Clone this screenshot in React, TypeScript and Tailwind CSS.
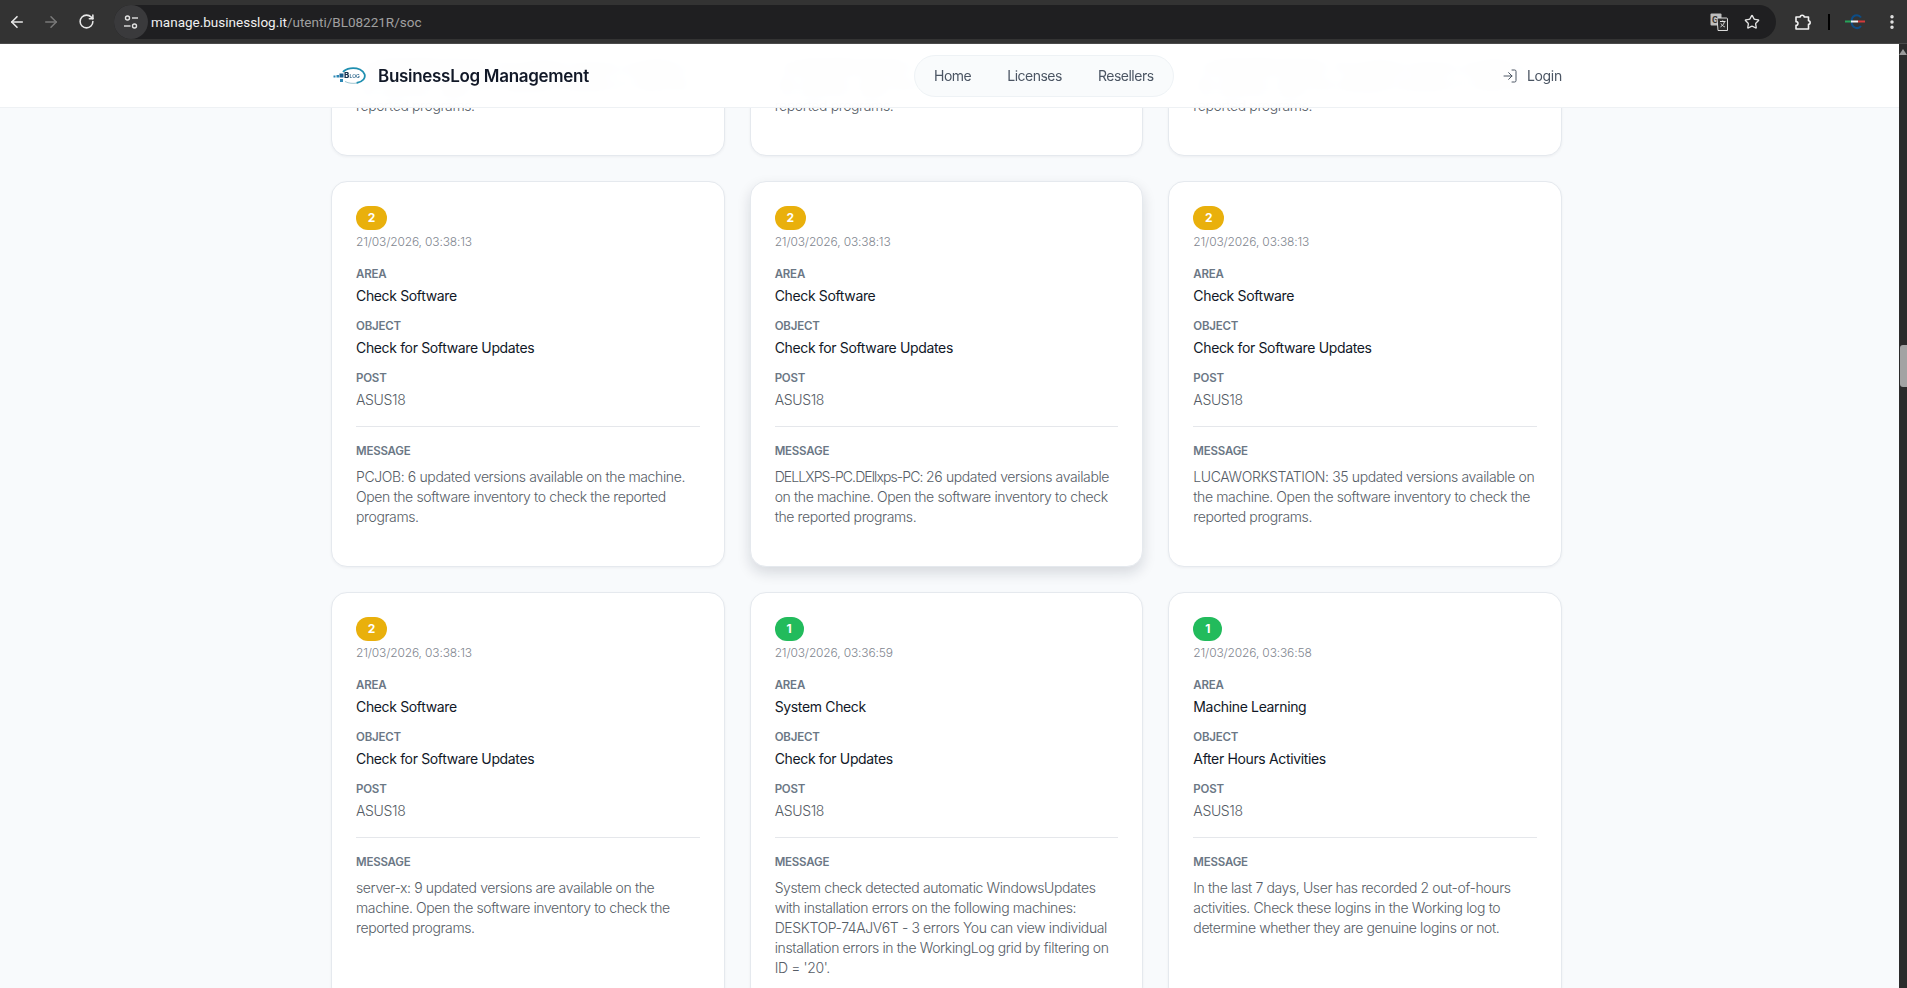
import type { ReactNode } from "react";
import { ArrowLeft, ArrowRight, RotateCw, Star, EllipsisVertical, LogIn } from "lucide-react";

type CardData = { level: number; date: string; area: string; object: string; post: string; message: ReactNode; raised?: boolean };

const sw = "Check Software";
const upd = "Check for Software Updates";
const cards: CardData[] = [
  { level: 2, date: "21/03/2026, 03:38:13", area: sw, object: upd, post: "ASUS18", message: "LUCAWORKSTATION: 35 updated versions available on the machine. Open the software inventory to check the reported programs." },
  { level: 2, date: "21/03/2026, 03:38:13", area: sw, object: upd, post: "ASUS18", message: "LUCAWORKSTATION: 35 updated versions available on the machine. Open the software inventory to check the reported programs." },
  { level: 2, date: "21/03/2026, 03:38:13", area: sw, object: upd, post: "ASUS18", message: "LUCAWORKSTATION: 35 updated versions available on the machine. Open the software inventory to check the reported programs." },
  { level: 2, date: "21/03/2026, 03:38:13", area: sw, object: upd, post: "ASUS18", message: "PCJOB: 6 updated versions available on the machine. Open the software inventory to check the reported programs." },
  {
    level: 2,
    date: "21/03/2026, 03:38:13",
    area: sw,
    object: upd,
    post: "ASUS18",
    message: (
      <>
        <span className="tracking-[-0.9px]">DELLXPS-PC.DEllxps-PC:</span> 26 updated versions available on the machine. Open the software inventory to check the reported programs.
      </>
    ),
    raised: true,
  },
  { level: 2, date: "21/03/2026, 03:38:13", area: sw, object: upd, post: "ASUS18", message: "LUCAWORKSTATION: 35 updated versions available on the machine. Open the software inventory to check the reported programs." },
  { level: 2, date: "21/03/2026, 03:38:13", area: sw, object: upd, post: "ASUS18", message: "server-x: 9 updated versions are available on the machine. Open the software inventory to check the reported programs." },
  { level: 1, date: "21/03/2026, 03:36:59", area: "System Check", object: "Check for Updates", post: "ASUS18", message: "System check detected automatic WindowsUpdates with installation errors on the following machines: DESKTOP-74AJV6T - 3 errors You can view individual installation errors in the WorkingLog grid by filtering on ID = '20'." },
  { level: 1, date: "21/03/2026, 03:36:58", area: "Machine Learning", object: "After Hours Activities", post: "ASUS18", message: "In the last 7 days, User has recorded 2 out-of-hours activities. Check these logins in the Working log to determine whether they are genuine logins or not." },
];

function Label({ children }: { children: string }) {
  return <div className="text-[11.5px] leading-4 font-semibold tracking-[-0.2px] text-[#6b7785]">{children}</div>;
}

function Field({ label, value, muted }: { label: string; value: string; muted?: boolean }) {
  return (
    <div>
      <Label>{label}</Label>
      <div className={`mt-1 text-sm leading-5 tracking-[-0.35px] ${muted ? "font-light text-[#565d66]" : "text-[#111827]"}`}>{value}</div>
    </div>
  );
}

function Card({ c }: { c: CardData }) {
  return (
    <div
      className={`rounded-2xl border border-[#e5e9ee] bg-white p-6 ${
        c.raised ? "shadow-[0_6px_14px_rgba(15,23,42,0.14)]" : "shadow-[0_1px_3px_rgba(15,23,42,0.05)]"
      }`}
    >
      <div
        className={`flex h-6 items-center justify-center rounded-full text-xs font-bold text-white ${
          c.level === 2 ? "w-[31px] bg-[#e9b00c]" : "w-[29px] bg-[#22bb5c]"
        }`}
      >
        {c.level}
      </div>
      <div className="mt-1 text-xs leading-4 font-light tracking-[-0.15px] text-[#7f868f]">{c.date}</div>
      <div className="mt-4 flex flex-col gap-3">
        <Field label="AREA" value={c.area} />
        <Field label="OBJECT" value={c.object} />
        <Field label="POST" value={c.post} muted />
      </div>
      <div className="mt-4 border-t border-[#e5e7eb] pt-4">
        <Label>MESSAGE</Label>
        <p className="mt-2 min-h-[75px] text-sm leading-5 font-light tracking-[-0.38px] text-[#565d66]">{c.message}</p>
      </div>
    </div>
  );
}

function TuneIcon() {
  return (
    <svg width="16" height="16" viewBox="0 0 16 16" fill="none" stroke="#e3e3e3" strokeWidth="1.4">
      <circle cx="4.5" cy="4" r="2" />
      <path d="M9 4h6" />
      <circle cx="11.5" cy="12" r="2" />
      <path d="M1 12h6.5" />
    </svg>
  );
}

function TranslateIcon() {
  return (
    <svg width="18" height="18" viewBox="0 0 18 18">
      <rect x="0.5" y="0.5" width="11" height="12" rx="1" fill="#bdbdbd" />
      <text x="2" y="10" fontSize="9" fontWeight="700" fontFamily="Roboto, sans-serif" fill="#333">G</text>
      <path d="M7 5h9.5a1 1 0 0 1 1 1v11.5H8z" fill="#2b2b2b" stroke="#d8d8d8" strokeWidth="1" />
      <path d="M10 8.5h5.5M12.7 7.5v1M14.5 8.5c-.6 2.6-2 4.2-4 5.4M11 10.5c.8 1.5 2 2.7 3.8 3.4" stroke="#e3e3e3" strokeWidth="1" fill="none" />
    </svg>
  );
}

function ExtensionIcon() {
  return (
    <svg width="18" height="18" viewBox="0 0 18 18" fill="none" stroke="#f2f2f2" strokeWidth="1.6" strokeLinejoin="round">
      <path d="M2 4h4.2C6.2 1.6 10.2 1.6 10.2 4H14.5v3.8c2.2 0 2.2 3.6 0 3.6V16H2v-3.6c2.6.2 2.6-4 0-3.8z" />
    </svg>
  );
}

function ProfileLogo() {
  return (
    <svg width="22" height="22" viewBox="0 0 22 22" fill="none">
      <path d="M17 6.5C14 2.5 7.5 4 7.5 10.5s6.5 8.5 9.5 4.5" stroke="#0d4d86" strokeWidth="2" />
      <rect x="1" y="9.5" width="6" height="2" fill="#27a35a" />
      <rect x="7" y="9.5" width="7" height="2" fill="#f2f2f2" />
      <rect x="14" y="9.5" width="7" height="2" fill="#d43a3a" />
    </svg>
  );
}

function BrandLogo() {
  return (
    <svg width="33" height="18" viewBox="0 0 33 18" fill="none" className="ml-[2px] shrink-0">
      <path d="M10 5C13 1 21 0 27 2.5c5 2.5 6 7 3.5 10-1.5 1.8-4 3-7 3.5" stroke="#1f8fb0" strokeWidth="1.8" />
      <path d="M12 14.5c4 2 8 2.2 12 1.5" stroke="#9fc6d2" strokeWidth="1" />
      <rect x="0.5" y="8.5" width="2" height="2" fill="#2b87b5" />
      <rect x="3.5" y="8" width="2.5" height="2.5" fill="#2b87b5" />
      <rect x="6.5" y="6.5" width="4" height="4" fill="#1a5f8f" />
      <rect x="7" y="12" width="3" height="3" fill="#2b87b5" />
      <text x="11" y="11" fontSize="8" fontWeight="800" fontFamily="Inter, sans-serif" fill="#16324f">B</text>
      <text x="16.5" y="10.5" fontSize="5" fontWeight="600" fontFamily="Inter, sans-serif" fill="#1f5d85">LOG</text>
    </svg>
  );
}

export default function App() {
  return (
    <div className="flex h-screen flex-col overflow-hidden font-['Inter',sans-serif]">
      <div className="flex h-[44px] shrink-0 items-center border-b border-[#4a4a4a] bg-[#333333] font-['Roboto',sans-serif] text-[#e3e3e3]">
        <div className="flex w-[114px] items-center pl-[8px]">
          <ArrowLeft size={18} strokeWidth={2.2} className="text-[#e8e8e8]" />
          <ArrowRight size={18} strokeWidth={2} className="ml-[16px] text-[#7a7a7a]" />
          <RotateCw size={17} strokeWidth={2.2} className="ml-[18px] text-[#e8e8e8]" />
        </div>
        <div className="flex h-[34px] w-[1662px] items-center rounded-full bg-[#1f1f21]">
          <div className="flex h-[34px] w-[34px] items-center justify-center rounded-full bg-[#3a3a3c]">
            <TuneIcon />
          </div>
          <span className="ml-[3px] text-[13.5px] leading-5 text-[#f0f0f0]">
            manage.businesslog.it<span className="text-[#a0a0a0]">/utenti/BL08221R/soc</span>
          </span>
          <div className="ml-auto flex items-center gap-[16px] pr-[16px]">
            <TranslateIcon />
            <Star size={16} strokeWidth={2} className="text-[#e3e3e3]" />
          </div>
        </div>
        <div className="ml-[18px]"><ExtensionIcon /></div>
        <div className="ml-[16px] h-[16px] w-[2px] bg-black" />
        <div className="ml-[14px]"><ProfileLogo /></div>
        <EllipsisVertical size={18} strokeWidth={2.6} className="ml-[17px] text-[#e8e8e8]" />
      </div>

      <div className="flex min-h-0 flex-1">
        <div className="relative min-w-0 flex-1 overflow-hidden bg-[#f8fafc]">
          <header className="relative z-10 h-[64px] border-b border-[#eef1f4] bg-white/95 backdrop-blur-sm">
            <div className="ml-[331px] flex h-full w-[1231px] items-center justify-between">
              <div className="flex w-[255px] items-center">
                <BrandLogo />
                <span className="ml-[12px] pt-[2px] text-[17px] font-semibold tracking-[-0.3px] whitespace-nowrap text-[#111827]">BusinessLog Management</span>
              </div>
              <nav className="flex h-[42px] w-[260px] items-center gap-[36px] rounded-full border border-[#eef2f5] bg-[#f9fbfc] pl-[19px] text-sm tracking-[-0.5px] text-[#4b5563]">
                <span>Home</span>
                <span>Licenses</span>
                <span>Resellers</span>
              </nav>
              <div className="flex w-[60px] items-center text-sm tracking-[-0.35px] text-[#4b5563]">
                <LogIn size={16} strokeWidth={1.5} className="mr-[9px] shrink-0" />
                <span>Login</span>
              </div>
            </div>
          </header>
          <main className="ml-[331px] mt-[-338px] grid w-[1231px] grid-cols-3 gap-[25px]">
            {cards.map((c, i) => (
              <Card key={i} c={c} />
            ))}
          </main>
        </div>
        <div className="flex w-[8px] shrink-0 flex-col items-center bg-[#2b2b2b]">
          <div className="mt-[5px] h-0 w-0 border-x-[4px] border-b-[6px] border-x-transparent border-b-[#9a9a9a]" />
          <div className="mt-[290px] h-[42px] w-[7px] rounded-l-[3px] bg-[#a3a3a3]" />
        </div>
      </div>
    </div>
  );
}
